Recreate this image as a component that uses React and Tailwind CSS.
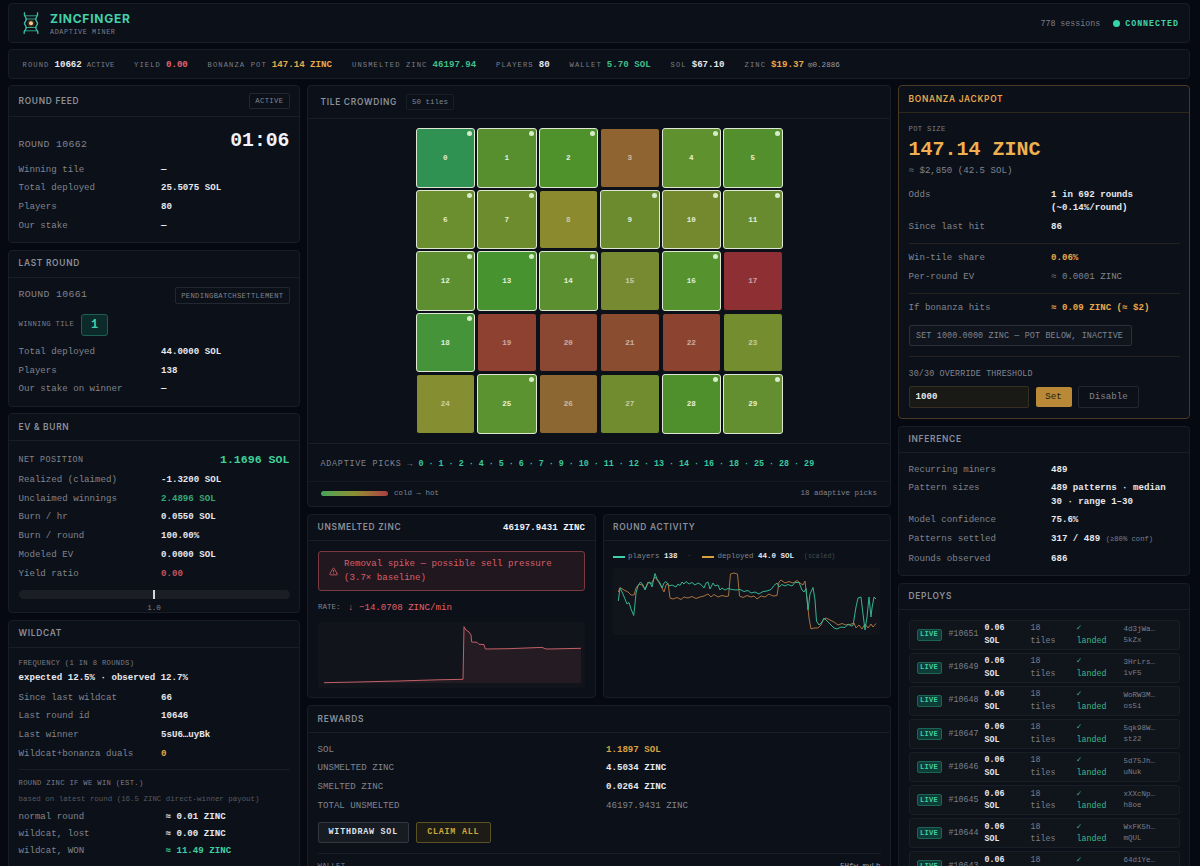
import clsx from "clsx";
import { TriangleAlert } from "lucide-react";

const TICKER = [
  { label: "Round", value: "10662", note: "ACTIVE", width: "w-[111.5px]" },
  { label: "Yield", value: "0.00", tone: "text-[#e5626d]", width: "w-[73.5px]" },
  { label: "Bonanza pot", value: "147.14 ZINC", tone: "text-[#e8a94a]", width: "w-[144.5px]" },
  { label: "Unsmelted zinc", value: "46197.94", tone: "text-[#3fbf8b]", width: "w-[144px]" },
  { label: "Players", value: "80", width: "w-[73.5px]" },
  { label: "Wallet", value: "5.70 SOL", tone: "text-[#3fbf8b]", width: "w-[101px]" },
  { label: "Sol", value: "$67.10", width: "w-[74px]" },
  { label: "Zinc", value: "$19.37", tone: "text-[#e8a94a]", tail: "◎0.2886", width: "w-[120px]" },
];

const TILES = [
  { color: "#2f9152", picked: true },
  { color: "#588f2e", picked: true },
  { color: "#4f922c", picked: true },
  { color: "#8f6431" },
  { color: "#5f912e", picked: true },
  { color: "#548f2d", picked: true },
  { color: "#6b8e2e", picked: true },
  { color: "#6d8c2e", picked: true },
  { color: "#8b8a2f" },
  { color: "#6c8b2f", picked: true },
  { color: "#74892e", picked: true },
  { color: "#688b30", picked: true },
  { color: "#5d8f31", picked: true },
  { color: "#46932f", picked: true },
  { color: "#5c8f30", picked: true },
  { color: "#788a31" },
  { color: "#56922e", picked: true },
  { color: "#8e2f33" },
  { color: "#45943a", picked: true },
  { color: "#8f4131" },
  { color: "#8a4731" },
  { color: "#8b4d2f" },
  { color: "#8c4330" },
  { color: "#748d2f" },
  { color: "#858f31" },
  { color: "#5a932f", picked: true },
  { color: "#8d6732" },
  { color: "#718b2f" },
  { color: "#4f902c", picked: true },
  { color: "#638f30", picked: true },
];

const PICKS = TILES.flatMap((tile, i) => (tile.picked ? [i] : []));

const DEPLOYS = [
  { round: "10651", hash: ["4d3jWa…", "5kZx"] },
  { round: "10649", hash: ["3HrLrs…", "1vF5"] },
  { round: "10648", hash: ["WoRW3M…", "os5i"] },
  { round: "10647", hash: ["5qk98W…", "st22"] },
  { round: "10646", hash: ["5d75Jh…", "uNuk"] },
  { round: "10645", hash: ["xXXcNp…", "h8oe"] },
  { round: "10644", hash: ["WxFK5h…", "mQUL"] },
  { round: "10643", hash: ["64d1Ye…", "p9Lc"] },
];

const UNSMELTED_LINE =
  "6,60.7 40,60 80,59 120,57.8 145,57.3 146,4.7 148,8 151,10 153,13 153.7,20 159,20.3 161,22.3 166,22.6 167.3,27 190,26.7 224,25.4 228,27 240,26.8 263,26.3";

const PLAYERS_LINE =
  "5.3,33 7,20 9.5,25 12,31 14,36 16,34.5 18,41 20.7,47.5 22,36 23,25 25,18 27.5,14 30,17 32,22 35,15 37,14 39,19 42,5.5 44,11 47,15 49,20 51,15 53,13.5 56,18 59,17 61,18 63,19 65,16 67,17.5 69,14 71,16 73,13.5 76,16 79,14.5 82,17 85,15 88,16.5 91,20 93,15 95,14 97,21 100,15 102,18 105,17 107,22 109,20 112,22 115,20.5 119,21.5 123,22 127,21.5 131,23.5 135,22.5 138,25 142,24 146,26 150,23.5 154,23 158,21.5 161,17.5 164,15 166,19 169,16.5 172,18 175,16.5 179,18 182,14.5 186,14.5 189,22 191,24 193,20.5 195,42 197,26 200,19.5 202,32 203.5,53 206,57 209,54 211,50 214,53 218,57 221,60 224,61 228,59 232,59.5 235,56 238,58 240,57.5 243,39 245,30 248,29 250,46 252,62 254,49 256,29 258,49 259,40 261,29 263,31";

const DEPLOYED_LINE =
  "5.3,24 7,19.5 11,22 15,24 18,27 21,27 23,20 26,16 29,17 32,21 35,14 38,16 42,9 45,13 48,18 51,24 53,17 55,15 57,30 60,31 64,29.5 68,31.5 71,29 75,30 79,28.5 83,30.5 87,29 91,28 95,26 98,29 101,26.5 105,29 109,27.5 113,28.5 115.5,28 117.5,6 121,5 124.5,6 126.5,28 130,29.5 134,27.5 138,29 141,28 144,31 148,28 152,29 156,26 160,28 164,27.5 166,14 168,12 172,15 176,13.5 180,15 184,12.5 187,15 190,17 192,13 194,31 196,50 198,61 201,60 205,60 208,57 210,52 213,50 217,52 221,54 225,57 229,55.5 233,57 237,56.5 241,55 243,60 246,57 249,61 252,56 255,60 258,56 260,59 263,55.5";

function Panel({ title, gold, headClass, right, className, children }) {
  return (
    <section
      className={clsx(
        "flex flex-col rounded-[4px] border bg-[#0c1018]",
        gold ? "border-[#4a3b22]" : "border-[#191d25]",
        className,
      )}
    >
      <header
        className={clsx(
          "flex shrink-0 items-center border-b",
          gold ? "border-[#2f281c]" : "border-[#191d25]",
          headClass || "h-[27px] px-[9.500px]",
        )}
      >
        <h2
          className={clsx(
            "font-[Inter] text-[8.4px] font-semibold uppercase tracking-[0.72px] whitespace-nowrap",
            gold ? "text-[#e8a94a]" : "text-[#8b8f98]",
          )}
        >
          {title}
        </h2>
        {right}
      </header>
      {children}
    </section>
  );
}

function Row({ label, tone = "text-[#e6e8ee] font-bold", children }) {
  return (
    <div className="grid grid-cols-2 gap-[14px] py-[2.6px] leading-[13.5px]">
      <span className="whitespace-nowrap text-[#80848e]">{label}</span>
      <span className={tone}>{children}</span>
    </div>
  );
}

function SmallLabel({ className, children }) {
  return (
    <div className={clsx("whitespace-nowrap text-[7.2px] uppercase tracking-[0.32px] text-[#7b7f89]", className)}>
      {children}
    </div>
  );
}

function Logo() {
  return (
    <svg viewBox="0 0 20 24" className="h-[24px] w-[20px]" fill="none" strokeLinecap="round">
      <g stroke="#2f9d88" strokeWidth="1">
        <path d="M4 4.800h12M5 8h10M5 16.500h10M4 19.800h12" />
      </g>
      <g stroke="#3dbda2" strokeWidth="1.400">
        <path d="M3.500 1.800C2.500 5 5.500 6 5.200 8.500C5 10.500 3.500 11 3.500 12.500C3.500 14 5.500 14.500 5.200 17C5 19.500 2.500 19.500 3.200 22.200" />
        <path d="M16.500 1.800C17.500 5 14.500 6 14.800 8.500C15 10.500 16.500 11 16.500 12.500C16.500 14 14.500 14.500 14.800 17C15 19.500 17.500 19.500 16.800 22.200" />
      </g>
      <circle cx="10" cy="12.300" r="3.600" fill="#3a2a1c" />
      <circle cx="10" cy="12.300" r="2" fill="#f5c98f" />
    </svg>
  );
}

function TopBar() {
  return (
    <header className="flex h-[40px] items-center justify-between rounded-[4px] border border-[#191d25] bg-[#0c1018] pr-[10px] pl-[12px]">
      <div className="flex items-center gap-[9px]">
        <Logo />
        <div className="pt-[3px]">
          <h1 className="font-[Inter] text-[12px] leading-[14px] font-bold tracking-[0.75px] text-[#43d1aa]">
            ZINCFINGER
          </h1>
          <p className="mt-[1px] text-[6.8px] leading-[10px] tracking-[0.6px] text-[#7b7f89]">ADAPTIVE MINER</p>
        </div>
      </div>
      <div className="flex items-center pt-[1.500px]">
        <span className="text-[8.3px] text-[#7b7f89]">778 sessions</span>
        <span className="mr-[5px] ml-[13px] size-[7px] rounded-full bg-[#35d3a8]" />
        <span className="text-[8.3px] font-bold tracking-[1px] text-[#43d1aa]">CONNECTED</span>
      </div>
    </header>
  );
}

function Ticker() {
  return (
    <div className="mt-[6px] flex h-[30px] items-center rounded-[4px] border border-[#191d25] bg-[#0c1018] pt-[1px] pl-[13.500px]">
      {TICKER.map((item) => (
        <div key={item.label} className={clsx("flex shrink-0 items-baseline whitespace-nowrap", item.width)}>
          <span className="mr-[5px] text-[7.2px] uppercase tracking-[1.080px] text-[#7b7f89]">{item.label}</span>
          <span className={clsx("font-bold", item.tone || "text-[#e6e8ee]")}>{item.value}</span>
          {item.note && <span className="ml-[5px] text-[7.2px] tracking-[0.3px] text-[#7b7f89]">{item.note}</span>}
          {item.tail && <span className="ml-[4px] text-[7.6px] text-[#9a9da5]">{item.tail}</span>}
        </div>
      ))}
    </div>
  );
}

function RoundFeed() {
  return (
    <Panel
      title="Round feed"
      className="h-[158px]"
      headClass="h-[31px] px-[9.500px]"
      right={
        <span className="ml-auto flex h-[16px] items-center rounded-[2px] border border-[#23272f] px-[5px] pt-[1px] text-[7.2px] tracking-[0.4px] text-[#80848e]">
          ACTIVE
        </span>
      }
    >
      <div className="px-[9.500px] pt-[9px]">
        <div className="flex h-[34px] justify-between">
          <span className="pt-[11.500px] text-[9.9px] tracking-[0.33px] text-[#80848e]">ROUND 10662</span>
          <span className="text-[19.8px] leading-[30px] font-bold text-[#f1f3f8]">01:06</span>
        </div>
        <Row label="Winning tile">—</Row>
        <Row label="Total deployed">25.5075 SOL</Row>
        <Row label="Players">80</Row>
        <Row label="Our stake">—</Row>
      </div>
    </Panel>
  );
}

function LastRound() {
  return (
    <Panel title="Last round" className="h-[157px]">
      <div className="px-[9.500px] pt-[8px]">
        <div className="flex h-[20px] items-center justify-between">
          <span className="text-[9.9px] tracking-[0.33px] text-[#80848e]">ROUND 10661</span>
          <span className="flex h-[17px] items-center rounded-[2px] border border-[#23272f] px-[5px] pt-[1px] text-[7.2px] tracking-[0.34px] text-[#80848e]">
            PENDINGBATCHSETTLEMENT
          </span>
        </div>
        <div className="mt-[8px] mb-[7px] flex h-[22px] items-center gap-[7px]">
          <SmallLabel>Winning tile</SmallLabel>
          <span className="flex h-[22px] w-[27px] items-center justify-center rounded-[3px] border border-[#1d5f53] bg-[#0d2a2a] text-[12px] font-bold text-[#43d1aa]">
            1
          </span>
        </div>
        <Row label="Total deployed">44.0000 SOL</Row>
        <Row label="Players">138</Row>
        <Row label="Our stake on winner">—</Row>
      </div>
    </Panel>
  );
}

function EvBurn() {
  return (
    <Panel title="EV & burn" className="h-[200px]">
      <div className="px-[9.500px] pt-[9px]">
        <div className="flex h-[20.500px] items-center justify-between">
          <span className="text-[8.4px] tracking-[0.38px] text-[#80848e]">NET POSITION</span>
          <span className="pb-[2px] text-[11.6px] font-bold text-[#3fcf98]">1.1696 SOL</span>
        </div>
        <Row label="Realized (claimed)">-1.3200 SOL</Row>
        <Row label="Unclaimed winnings" tone="text-[#35a878] font-bold">
          2.4896 SOL
        </Row>
        <Row label="Burn / hr">0.0550 SOL</Row>
        <Row label="Burn / round">100.00%</Row>
        <Row label="Modeled EV">0.0000 SOL</Row>
        <Row label="Yield ratio" tone="text-[#c9535e] font-bold">
          0.00
        </Row>
        <div className="mt-[7.500px] flex h-[9px] justify-center rounded-full bg-[#1b1e25]">
          <span className="h-[9px] w-[1.500px] bg-[#d5d7dc]" />
        </div>
        <p className="mt-[4px] text-center text-[7.6px] leading-[11px] text-[#80848e]">1.0</p>
      </div>
    </Panel>
  );
}

function Wildcat() {
  const estimates = [
    ["normal round", "≈ 0.01 ZINC", "text-[#e6e8ee]"],
    ["wildcat, lost", "≈ 0.00 ZINC", "text-[#e6e8ee]"],
    ["wildcat, WON", "≈ 11.49 ZINC", "text-[#3fcfa0]"],
  ];
  return (
    <Panel title="Wildcat" className="h-[260px]">
      <div className="px-[9.500px] pt-[9px]">
        <SmallLabel className="leading-[12px]">Frequency (1 in 8 rounds)</SmallLabel>
        <p className="pt-[2px] pb-[3.500px] leading-[14px] font-bold text-[#e6e8ee]">expected 12.5% · observed 12.7%</p>
        <Row label="Since last wildcat">66</Row>
        <Row label="Last round id">10646</Row>
        <Row label="Last winner">5sU6…uyBk</Row>
        <Row label="Wildcat+bonanza duals" tone="text-[#e8a94a] font-bold">
          0
        </Row>
        <div className="mt-[6.500px] border-t border-[#191d25] pt-[7px]">
          <SmallLabel className="leading-[12px]">Round zinc if we win (est.)</SmallLabel>
          <p className="pt-[4.500px] pb-[3px] text-[7.45px] leading-[11px] whitespace-nowrap text-[#565a63]">
            based on latest round (16.5 ZINC direct-winner payout)
          </p>
          {estimates.map(([label, value, tone]) => (
            <div key={label} className="flex leading-[17px]">
              <span className="w-[147px] text-[#80848e]">{label}</span>
              <span className={clsx("font-bold", tone)}>{value}</span>
            </div>
          ))}
        </div>
      </div>
    </Panel>
  );
}

function TileCrowding() {
  return (
    <Panel
      title="Tile crowding"
      className="h-[421.500px]"
      headClass="h-[33px] px-[12.500px]"
      right={
        <span className="ml-[9px] flex h-[16px] items-center rounded-[2px] border border-[#1a1e26] px-[5px] pt-[2px] text-[7.5px] text-[#80848e]">
          50 tiles
        </span>
      }
    >
      <div className="mx-auto mt-[9px] grid w-[367px] grid-cols-6 gap-[2px]">
        {TILES.map((tile, i) => (
          <div
            key={i}
            className={clsx(
              "relative flex h-[59.500px] items-center justify-center rounded-[3px] border pt-[2px] text-[7.6px] font-bold",
              tile.picked ? "border-[#dfe6d4] text-[#e4efd8]" : "border-[#0c1018] text-white/55",
            )}
            style={{ backgroundColor: tile.color }}
          >
            {i}
            {tile.picked && (
              <span className="absolute top-[2px] right-[2px] size-[5px] rounded-full bg-[#d6ecc9]" />
            )}
          </div>
        ))}
      </div>
      <div className="mt-[9.500px] flex h-[38px] items-center border-t border-[#191d25] px-[12.500px] pt-[4px]">
        <span className="text-[8.4px] tracking-[0.76px] whitespace-nowrap text-[#80848e]">ADAPTIVE PICKS →</span>
        <span className="ml-[5.500px] text-[8.35px] font-bold whitespace-nowrap text-[#35c9a0]">{PICKS.join(" · ")}</span>
      </div>
      <div className="flex h-[25px] items-center border-t border-[#141820] px-[13px] text-[7.5px] text-[#80848e]">
        <span className="mr-[6px] h-[5px] w-[67px] rounded-full bg-linear-to-r from-[#3fa559] via-[#8b8f30] to-[#a93b41]" />
        cold → hot
        <span className="ml-auto">18 adaptive picks</span>
      </div>
    </Panel>
  );
}

function UnsmeltedZinc() {
  return (
    <Panel
      title="Unsmelted zinc"
      className="h-[184.500px]"
      headClass="h-[26px] px-[9.500px]"
      right={<span className="ml-auto pt-[1px] font-bold text-[#f1f3f8]">46197.9431 ZINC</span>}
    >
      <div className="px-[10px] pt-[10.500px]">
        <div className="flex h-[40px] items-center gap-[6px] rounded-[3px] border border-[#7c3840] bg-[#21171e] pl-[10px] text-[#d95f6a]">
          <TriangleAlert className="size-[9px]" strokeWidth={2.2} />
          <p className="leading-[14px]">
            Removal spike — possible sell pressure
            <br />
            (3.7× baseline)
          </p>
        </div>
        <div className="mt-[9px] flex h-[15px] items-center">
          <span className="text-[7.5px] text-[#80848e]">RATE:</span>
          <span className="ml-[7.500px] text-[#e0616c]">↓ −14.0708 ZINC/min</span>
        </div>
        <svg viewBox="0 0 267 66" className="mt-[7px] h-[66px] w-[267px] rounded-[3px] bg-[#11151b]">
          <polygon points={`${UNSMELTED_LINE} 263,61 6,61`} fill="#d95f6a" fillOpacity="0.1" />
          <polyline points={UNSMELTED_LINE} fill="none" stroke="#c25f69" strokeWidth="1" />
        </svg>
      </div>
    </Panel>
  );
}

function RoundActivity() {
  return (
    <Panel title="Round activity" className="h-[184.500px]" headClass="h-[26px] px-[9.500px]">
      <div className="px-[9.500px] pt-[9.500px]">
        <div className="flex h-[13px] items-center text-[7.5px] whitespace-nowrap text-[#80848e]">
          <span className="mr-[3px] h-[2px] w-[12px] shrink-0 bg-[#3fcfae]" />
          players&nbsp;<b className="text-[#e6e8ee]">138</b>
          <span className="mx-[9px] w-[6px] text-center text-[#3c4048]">·</span>
          <span className="mr-[4px] h-[2px] w-[12px] shrink-0 bg-[#d9a03f]" />
          deployed&nbsp;<b className="text-[#e6e8ee]">44.0 SOL</b>
          <span className="ml-[10px] text-[6.5px] text-[#474b54]">(scaled)</span>
        </div>
        <svg viewBox="0 0 267 67" className="mt-[5px] h-[67px] w-[267px] rounded-[3px] bg-[#11151b]" fill="none">
          <polyline points={DEPLOYED_LINE} stroke="#a9713f" strokeWidth="1" />
          <polyline points={PLAYERS_LINE} stroke="#35b394" strokeWidth="1" />
        </svg>
      </div>
    </Panel>
  );
}

function Rewards() {
  return (
    <Panel title="Rewards" className="h-[200px]">
      <div className="px-[9.500px] pt-[7px]">
        <Row label="SOL" tone="text-[#d9a441] font-bold">
          1.1897 SOL
        </Row>
        <Row label="UNSMELTED ZINC">4.5034 ZINC</Row>
        <Row label="SMELTED ZINC">0.0264 ZINC</Row>
        <Row label="TOTAL UNSMELTED" tone="text-[#80848e]">
          46197.9431 ZINC
        </Row>
        <div className="mt-[7px] flex gap-[7px] text-[8.4px] font-bold tracking-[0.75px]">
          <button className="h-[21px] w-[91.500px] rounded-[2px] border border-[#33373f] bg-[#171b22] text-[#dfe1e6]">
            WITHDRAW SOL
          </button>
          <button className="h-[21px] w-[74.500px] rounded-[2px] border border-[#5b5122] bg-[#1c1b16] text-[#d0a73a]">
            CLAIM ALL
          </button>
        </div>
        <div className="mt-[10px] flex items-center justify-between border-t border-[#191d25] pt-[6px]">
          <SmallLabel className="leading-[12px]">Wallet</SmallLabel>
          <span className="text-[7.5px] leading-[12px] text-[#9a9da5]">5Hfw…mvLb</span>
        </div>
      </div>
    </Panel>
  );
}

function Bonanza() {
  return (
    <Panel title="Bonanza jackpot" gold className="h-[334px]">
      <div className="px-[9.500px] pt-[10px]">
        <SmallLabel className="leading-[12px]">Pot size</SmallLabel>
        <p className="pt-[1px] text-[20px] leading-[28px] font-bold text-[#f0b04f]">147.14 ZINC</p>
        <p className="mb-[7px] leading-[14px] text-[#80848e]">≈ $2,850 (42.5 SOL)</p>
        <Row label="Odds">
          1 in 692 rounds
          <br />
          (~0.14%/round)
        </Row>
        <Row label="Since last hit">86</Row>
        <div className="mt-[7px] border-t border-[#26231f] pt-[5px]">
          <Row label="Win-tile share" tone="text-[#e8a94a] font-bold">
            0.06%
          </Row>
          <Row label="Per-round EV" tone="text-[#80848e]">
            ≈ 0.0001 ZINC
          </Row>
        </div>
        <div className="mt-[7px] border-t border-[#26231f] pt-[4px]">
          <Row label="If bonanza hits" tone="text-[#e8a94a] font-bold whitespace-nowrap">
            ≈ 0.09 ZINC (≈ $2)
          </Row>
        </div>
        <div className="mt-[8.500px] flex h-[21px] w-[223px] items-center rounded-[2px] border border-[#2b2f38] bg-[#10141d] pt-[1px] pl-[6.500px] text-[8.4px] tracking-[0.15px] whitespace-nowrap text-[#80848e]">
          SET 1000.0000 ZINC — POT BELOW, INACTIVE
        </div>
        <div className="mt-[10px] border-t border-[#26231f] pt-[10px]">
          <p className="text-[8.4px] leading-[14px] tracking-[0.15px] text-[#80848e]">30/30 OVERRIDE THRESHOLD</p>
          <div className="mt-[4.500px] flex items-center gap-[6.500px]">
            <input
              defaultValue="1000"
              className="h-[22px] w-[120.500px] rounded-[2px] border border-[#35301f] bg-[#191915] pl-[6px] font-bold text-[#e6e8ee] outline-none"
            />
            <button className="h-[20.500px] w-[36px] rounded-[2px] bg-[#b98937] text-[#231b0d]">Set</button>
            <button className="h-[22px] w-[61px] rounded-[2px] border border-[#23272f] text-[#80848e]">Disable</button>
          </div>
        </div>
      </div>
    </Panel>
  );
}

function Inference() {
  return (
    <Panel title="Inference" className="h-[150px]" headClass="h-[26px] px-[9.500px]">
      <div className="px-[9.500px] pt-[7px]">
        <Row label="Recurring miners">489</Row>
        <Row label="Pattern sizes">489 patterns · median 30 · range 1–30</Row>
        <Row label="Model confidence">75.6%</Row>
        <Row label="Patterns settled">
          317 / 489 <span className="text-[7.2px] font-normal text-[#7b7f89]">(≥80% conf)</span>
        </Row>
        <Row label="Rounds observed">686</Row>
      </div>
    </Panel>
  );
}

function Deploys() {
  return (
    <Panel title="Deploys" className="h-[300px]" headClass="h-[26px] px-[9.500px]">
      <div className="flex flex-col gap-[3px] px-[9.500px] pt-[9.500px]">
        {DEPLOYS.map((deploy) => (
          <div
            key={deploy.round}
            className="flex h-[30.1px] shrink-0 items-center rounded-[3px] border border-[#191d25] bg-[#10141b] pl-[7px] text-[8.3px] leading-[12.500px]"
          >
            <span className="flex h-[12px] w-[25px] items-center justify-center rounded-[2px] border border-[#1c6456] bg-[#0e3d37] text-[7px] font-bold tracking-[0.3px] text-[#3fcfa6]">
              LIVE
            </span>
            <span className="ml-[7px] w-[36px] text-[#7b7f89]">#{deploy.round}</span>
            <span className="w-[46px] font-bold text-[#e6e8ee]">
              0.06
              <br />
              SOL
            </span>
            <span className="w-[46px] text-[#7b7f89]">
              18
              <br />
              tiles
            </span>
            <span className="w-[47px] text-[#38b98c]">
              ✓<br />
              landed
            </span>
            <span className="text-[7.5px] leading-[11px] text-[#7b7f89]">
              {deploy.hash[0]}
              <br />
              {deploy.hash[1]}
            </span>
          </div>
        ))}
      </div>
    </Panel>
  );
}

export default function App() {
  return (
    <div className="h-[866px] w-[1200px] overflow-hidden bg-[#060911] pt-[3px] pr-[10px] pl-[8px] font-['Liberation_Mono',monospace] text-[9.120px]">
      <TopBar />
      <Ticker />
      <main className="mt-[6px] flex items-start gap-[7px]">
        <div className="flex w-[292px] shrink-0 flex-col gap-[6.500px]">
          <RoundFeed />
          <LastRound />
          <EvBurn />
          <Wildcat />
        </div>
        <div className="flex min-w-0 flex-1 flex-col gap-[7px]">
          <TileCrowding />
          <div className="grid grid-cols-2 gap-[7px]">
            <UnsmeltedZinc />
            <RoundActivity />
          </div>
          <Rewards />
        </div>
        <div className="flex w-[292px] shrink-0 flex-col gap-[7px]">
          <Bonanza />
          <Inference />
          <Deploys />
        </div>
      </main>
    </div>
  );
}
